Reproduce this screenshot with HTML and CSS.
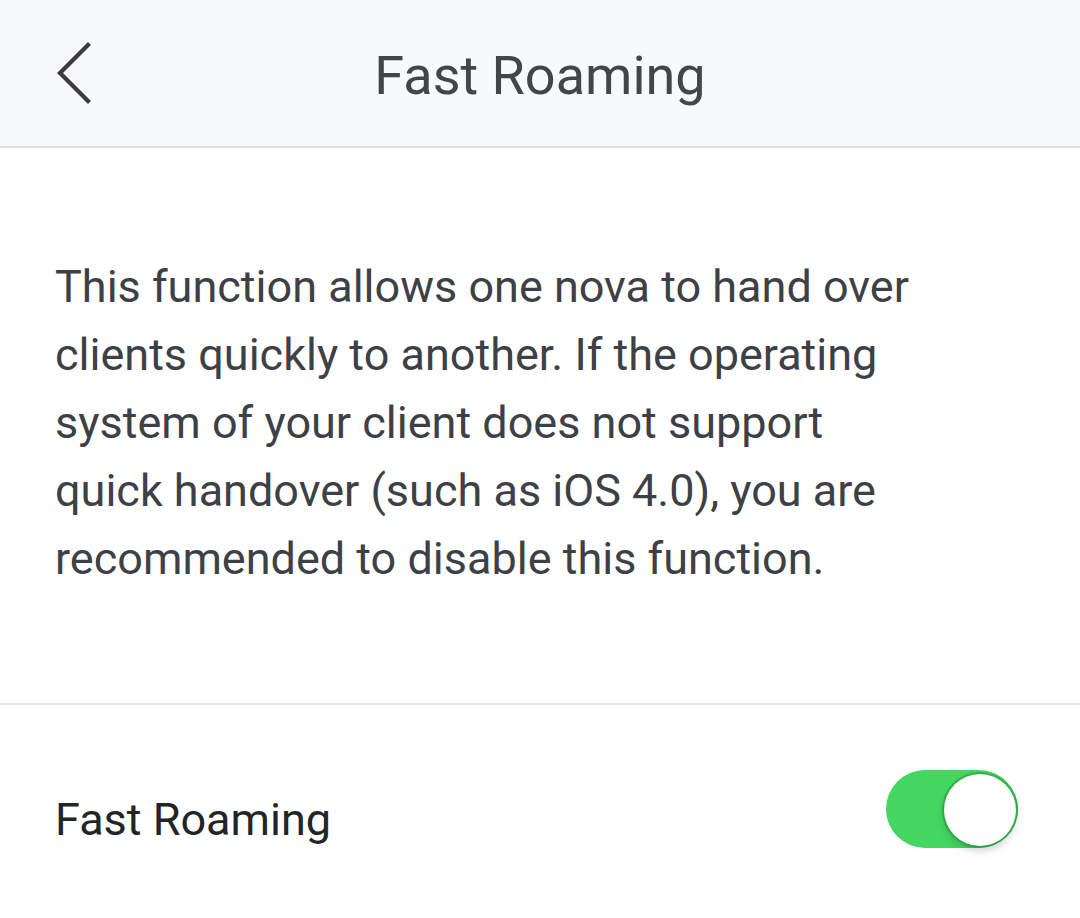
FILE: index.html
```html
<!DOCTYPE html>
<html>
<head>
<meta charset="utf-8">
<link rel="stylesheet" href="styles.css">
</head>
<body>
<header class="topbar">
  <svg class="back" width="40" height="64" viewBox="0 0 40 64">
    <polyline points="32,3 4,31 32,59" fill="none" stroke="#3b3b3d" stroke-width="4.2" stroke-linecap="square" stroke-linejoin="miter"/>
  </svg>
  <h1 class="title">Fast Roaming</h1>
</header>
<section class="desc">
  <p>This function allows one nova to hand over clients quickly to another. If the operating system of your client does not support quick handover (such as iOS 4.0), you are recommended to disable this function.</p>
</section>
<section class="row">
  <span class="label">Fast Roaming</span>
  <span class="toggle"><span class="knob"></span></span>
</section>
</body>
</html>
```
FILE: styles.css
```css
html, body {
  margin: 0;
  padding: 0;
  background: #ffffff;
  font-family: Roboto, "Noto Sans", sans-serif;
}
.topbar {
  height: 146px;
  background: #f8f9fb;
  border-bottom: 2px solid #dedfe1;
  display: flex;
  align-items: center;
  justify-content: center;
  position: relative;
}
.back {
  position: absolute;
  left: 56px;
  top: 42px;
}
.title {
  margin: 0;
  padding-top: 5px;
  font-size: 54px;
  font-weight: 400;
  color: #444548;
}
.desc {
  padding: 105px 0 110px 55px;
  border-bottom: 2px solid #e4e5e7;
}
.desc p {
  margin: 0;
  width: 870px;
  font-size: 45px;
  line-height: 68px;
  color: #3d4045;
}
.row {
  display: flex;
  justify-content: space-between;
  align-items: flex-start;
  padding: 65px 60px 0 55px;
}
.label {
  font-size: 45px;
  line-height: 80px;
  padding-top: 10px;
  color: #232426;
}
.toggle {
  width: 132px;
  height: 78px;
  border-radius: 39px;
  background: #44d661;
  position: relative;
  margin-left: auto;
  margin-right: 2px;
}
.knob {
  position: absolute;
  right: 2px;
  top: 4px;
  width: 72px;
  height: 72px;
  border-radius: 50%;
  background: #ffffff;
  box-shadow: 0 0 0 2px rgba(40, 140, 60, 0.55), 0 5px 8px rgba(0, 0, 0, 0.18);
}
```
